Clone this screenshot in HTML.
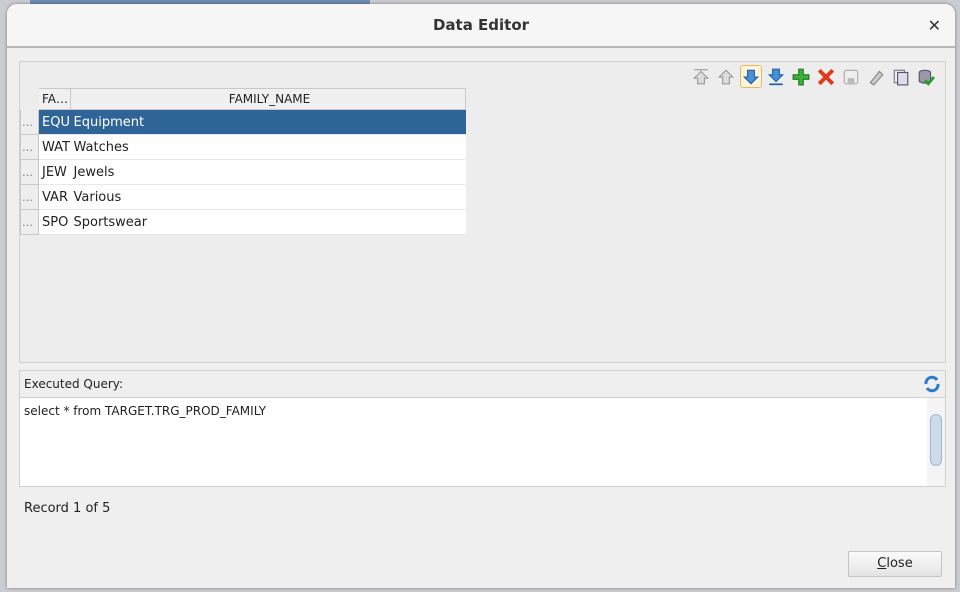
<!DOCTYPE html>
<html><head><meta charset="utf-8"><style>
*{box-sizing:border-box;margin:0;padding:0}
body{width:960px;height:592px;overflow:hidden;background:#c9ccd0;font-family:"DejaVu Sans","Liberation Sans",sans-serif;font-size:13px;color:#222;position:relative}
.bgtop{position:absolute;left:30px;top:0;width:340px;height:6px;background:#6f8bb0}
.dlg{position:absolute;left:7px;top:4px;width:948px;height:584px;background:#efefef;border-radius:10px 10px 0 0;box-shadow:0 0 3px rgba(0,0,0,.4)}
.title{height:44px;background:#f6f6f6;border-bottom:2px solid #b8b8b8;border-radius:10px 10px 0 0;text-align:center;line-height:43px;font-weight:bold;font-size:15px;color:#333}
.x{position:absolute;right:14px;top:12px;font-size:16px;font-weight:bold;color:#333}
.panel{position:absolute;left:12px;top:57px;width:927px;height:302px;border:1px solid #d0d0d0;background:#ededed}
.tb{position:absolute;right:8px;top:2px;height:25px;display:flex;gap:3px;align-items:center}
.tb div{width:22px;height:23px;display:flex;align-items:center;justify-content:center}
table{position:absolute;left:0;top:26px;border-collapse:collapse;background:#fff}
td,th{height:25px;border-bottom:1px solid #e8e8e8;white-space:nowrap;overflow:hidden;font-weight:normal;text-align:left;padding-left:3px}
th{height:21px;background:#f0f0f0;border:1px solid #c8c8c8;font-size:12px}
td.rh{background:#eee;border:1px solid #c8c8c8;color:#777;padding-left:1px;font-size:11px}
tr.sel td{background:#2f6498;color:#fff}
tr.sel td.rh{background:#eee;color:#777}
.q{position:absolute;left:12px;top:366px;width:927px;height:117px;border:1px solid #d0d0d0;background:#fff}
.qh{height:27px;background:#efefef;border-bottom:1px solid #d0d0d0;line-height:27px;padding-left:4px;font-size:12px}
.qt{padding:6px 4px;font-size:12px}
.sb{position:absolute;right:0;top:27px;width:18px;bottom:0;background:#f4f4f4}
.thumb{position:absolute;left:3px;top:16px;width:12px;height:52px;border-radius:6px;background:#cddcec;border:1px solid #9fb6cf}
.rec{position:absolute;left:17px;top:497px;font-size:13px}
.btn{position:absolute;left:841px;top:547px;width:94px;height:26px;border:1px solid #c4c4c4;border-radius:2px;background:linear-gradient(#fafafa,#e4e4e4);text-align:center;line-height:24px;font-size:13px}
</style></head><body>
<div class="bgtop"></div>
<div class="dlg">
<div class="title">Data Editor</div><div class="x">✕</div>
<div class="panel">
<div class="tb">
<div><svg width="18" height="18" viewBox="0 0 16 16"><path d="M8 3L14 9H11V14H5V9H2Z" fill="#ddd" stroke="#999"/><path d="M2 1.5H14" stroke="#999"/></svg></div>
<div><svg width="18" height="18" viewBox="0 0 16 16"><path d="M8 2L14 8H11V14H5V8H2Z" fill="#ddd" stroke="#999"/></svg></div>
<div style="border:1px solid #e8b860;border-radius:3px;background:#fff3dc"><svg width="18" height="18" viewBox="0 0 16 16"><path d="M8 14L14 8H11V2H5V8H2Z" fill="#4a90d9" stroke="#1e5fa8"/></svg></div>
<div><svg width="18" height="18" viewBox="0 0 16 16"><path d="M8 12L14 6H11V1H5V6H2Z" fill="#4a90d9" stroke="#1e5fa8"/><path d="M2 14.5H14" stroke="#1e5fa8" stroke-width="1.5"/></svg></div>
<div><svg width="18" height="18" viewBox="0 0 16 16"><path d="M6 1H10V6H15V10H10V15H6V10H1V6H6Z" fill="#3bb33b" stroke="#1d7a1d"/></svg></div>
<div><svg width="18" height="18" viewBox="0 0 16 16"><path d="M2 2L14 14M14 2L2 14" stroke="#e03a1e" stroke-width="3.5"/></svg></div>
<div><svg width="18" height="18" viewBox="0 0 16 16"><rect x="2" y="2" width="12" height="12" rx="2" fill="#eee" stroke="#aaa"/><rect x="5" y="9" width="6" height="5" fill="#bbb"/></svg></div>
<div><svg width="18" height="18" viewBox="0 0 16 16"><path d="M3 13L11 3L14 6L6 15Z" fill="#ccc" stroke="#888"/></svg></div>
<div><svg width="18" height="18" viewBox="0 0 16 16"><rect x="2" y="2" width="9" height="11" fill="#eee" stroke="#778"/><rect x="5" y="4" width="9" height="11" fill="#dde" stroke="#556"/></svg></div>
<div><svg width="18" height="18" viewBox="0 0 16 16"><ellipse cx="7" cy="4" rx="5" ry="2" fill="#99a" stroke="#556"/><path d="M2 4V12Q7 15 12 12V4" fill="#99a" stroke="#556"/><path d="M7 11L10 14L15 8" stroke="#2a9a2a" stroke-width="2.5" fill="none"/></svg></div>
</div>
<table>
<tr><th style="width:18px;background:#ededed;border-color:#ededed"></th><th style="width:32px">FA…</th><th style="width:395px;text-align:center">FAMILY_NAME</th></tr>
<tr class="sel"><td class="rh">…</td><td>EQU</td><td>Equipment</td></tr>
<tr><td class="rh">…</td><td>WAT</td><td>Watches</td></tr>
<tr><td class="rh">…</td><td>JEW</td><td>Jewels</td></tr>
<tr><td class="rh">…</td><td>VAR</td><td>Various</td></tr>
<tr><td class="rh">…</td><td>SPO</td><td>Sportswear</td></tr>
</table>
</div>
<div class="q"><div class="qh">Executed Query:<span style="position:absolute;right:4px;top:4px"><svg width="18" height="18"><path d="M3 9A6 6 0 0 1 14 5" stroke="#2a7ad0" stroke-width="3" fill="none"/><path d="M15 9A6 6 0 0 1 4 13" stroke="#2a7ad0" stroke-width="3" fill="none"/></svg></span></div>
<div class="qt">select * from TARGET.TRG_PROD_FAMILY</div>
<div class="sb"><div class="thumb"></div></div></div>
<div class="rec">Record 1 of 5</div>
<div class="btn"><u>C</u>lose</div>
</div>
</body></html>
